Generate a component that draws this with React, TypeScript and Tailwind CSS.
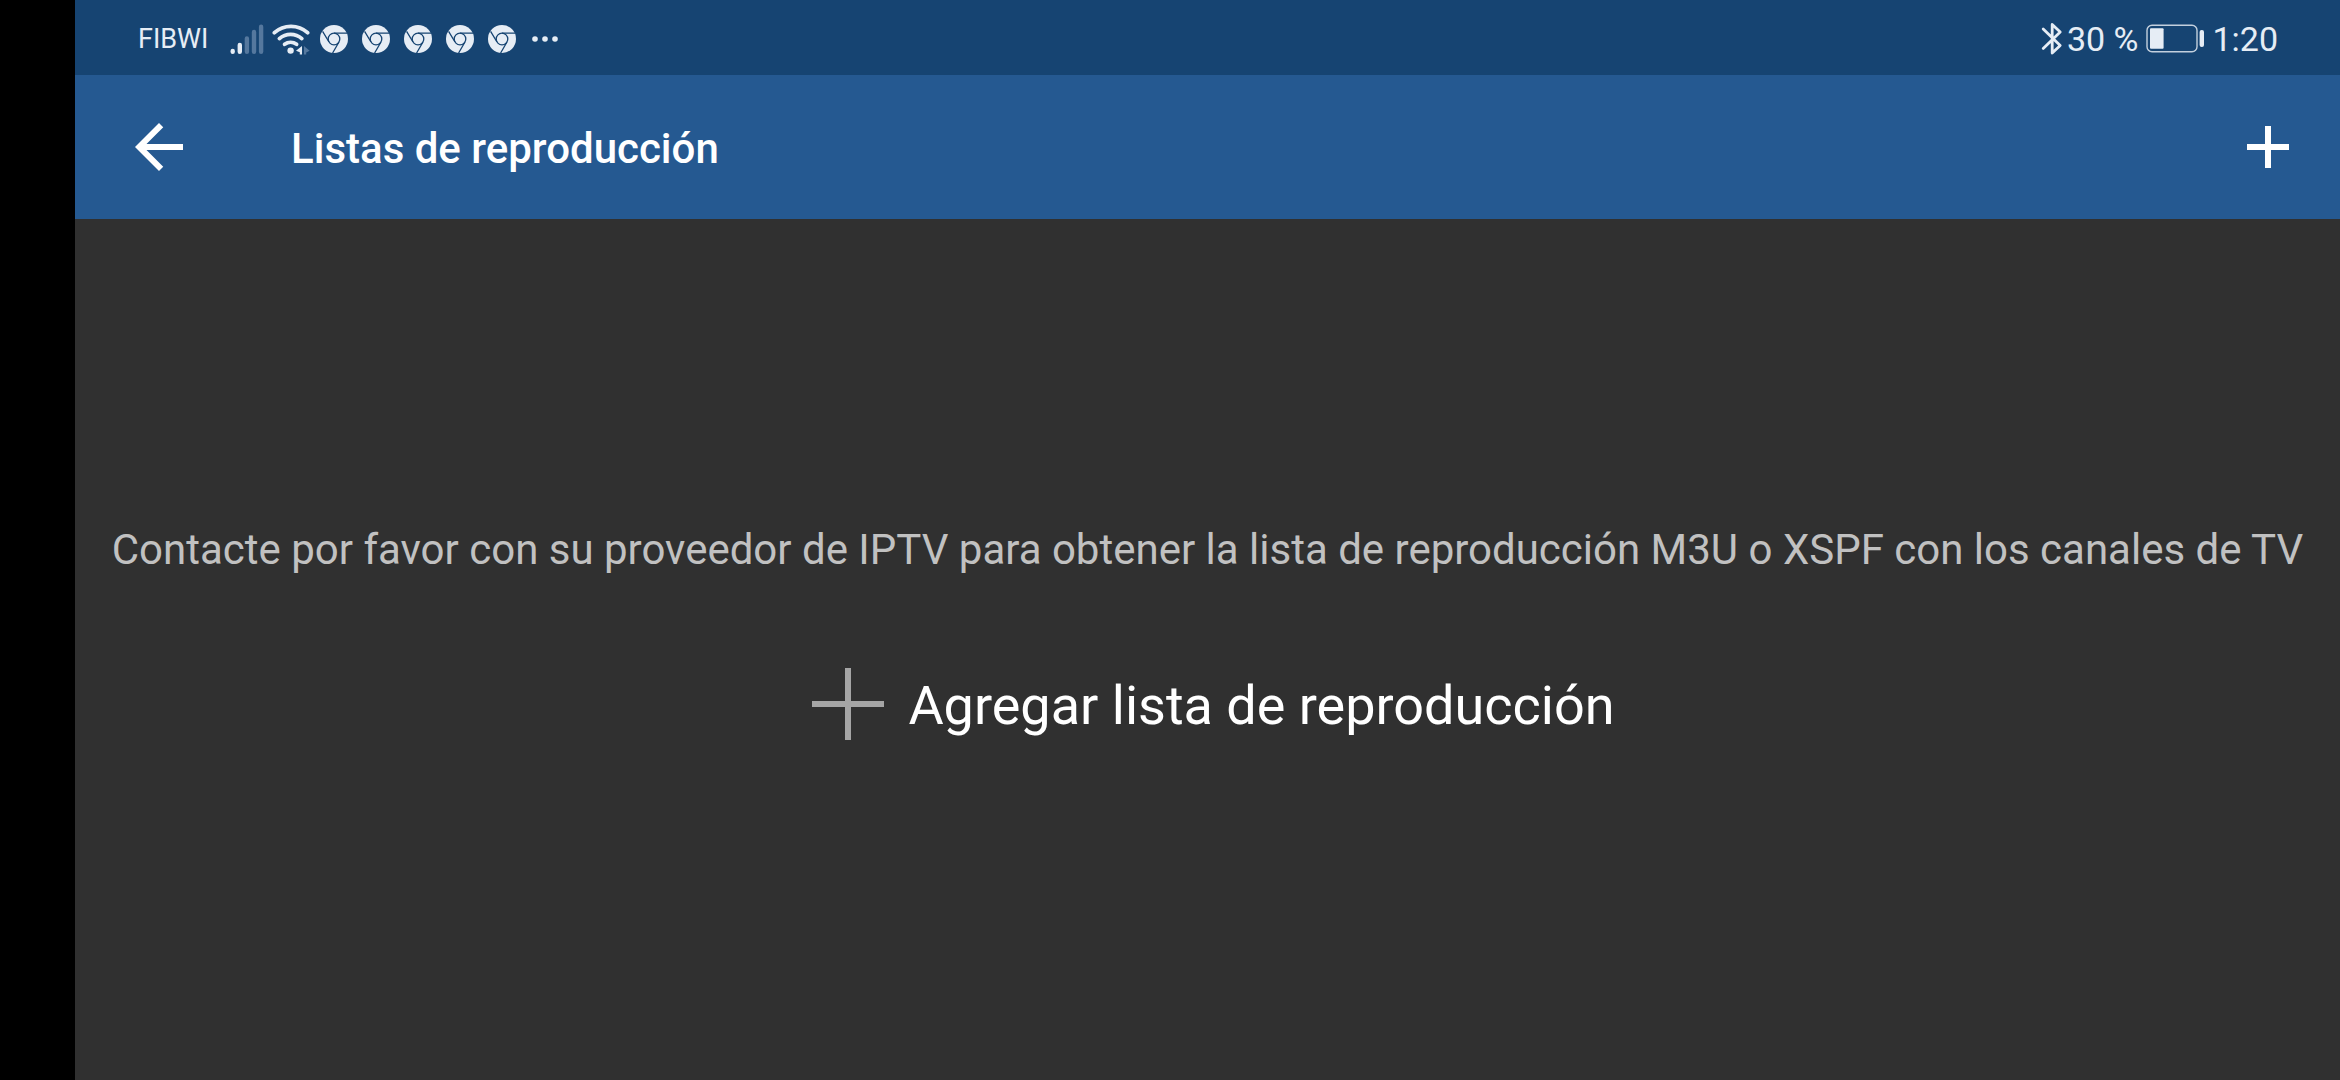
import React from 'react';

interface IconButtonProps {
  label: string;
  path: string;
}

const SignalIcon: React.FC = () => (
  <svg width="34" height="32" viewBox="0 0 34 32" strokeWidth="4.4" strokeLinecap="round" className="stroke-[#e6edf5]">
    <path d="M2.7 28v.8M9.8 22v6.8" />
    <path d="M16.9 15.5v13.3M24 9v19.8M31.1 3.7v25.1" className="stroke-[#55789e]" />
  </svg>
);

const WifiIcon: React.FC = () => (
  <svg width="38" height="32" viewBox="0 0 38 32" fill="none">
    <g strokeWidth="3.8" strokeLinecap="round" className="stroke-[#e6edf5]">
      <path d="M2.4 9.7a25 25 0 0 1 33.2 0" />
      <path d="M7.4 15.6a17 17 0 0 1 22.4 0" />
      <path d="M12.6 21.3a10 10 0 0 1 12 0" />
    </g>
    <circle cx="18.6" cy="27.6" r="3.2" className="fill-[#e6edf5]" />
    <path d="M30 23v8.6h-2.2v-2.4L24 27.8z" className="fill-[#e6edf5]" />
    <path d="M32 23l5.6 4.8-3.4 1.6v2.2H32z" className="fill-[#55789e]" />
  </svg>
);

const ChromeIcon: React.FC = () => (
  <svg width="28" height="28" viewBox="0 0 28 28" fill="none">
    <circle cx="14" cy="14" r="14" className="fill-[#e6edf5]" />
    <g strokeWidth="1.3" className="stroke-[#164472]">
      <circle cx="14" cy="14" r="5.8" />
      <path d="M14 8.2h13M9 17L2.6 6.3M19 17l-6.4 11" />
    </g>
  </svg>
);

const BluetoothIcon: React.FC = () => (
  <svg width="22" height="34" viewBox="0 0 22 34" fill="none" strokeWidth="2.8" strokeLinejoin="round" strokeLinecap="round" className="stroke-[#e6edf5]">
    <path d="M2.2 7l17 16.4-8 7.6V2.4l8 7.6-17 16.4" />
  </svg>
);

const BatteryIcon: React.FC = () => (
  <svg width="60" height="30" viewBox="0 0 60 30" fill="none">
    <rect x="1" y="1.2" width="50" height="26.6" rx="5" strokeWidth="1.4" className="stroke-[#c3d0de]" />
    <rect x="4" y="4.2" width="13.6" height="20.6" rx="1" className="fill-[#e6edf5]" />
    <rect x="53.6" y="6" width="4.4" height="17" rx="2" className="fill-[#e6edf5]" />
  </svg>
);

const IconButton: React.FC<IconButtonProps> = ({ label, path }) => (
  <button aria-label={label}>
    <svg viewBox="0 0 24 24" className="size-[72px] fill-white">
      <path d={path} />
    </svg>
  </button>
);

const StatusBar: React.FC = () => (
  <div className="flex h-[75px] items-center justify-between bg-[#164472] pl-[63px] pr-[62px] pt-[3px] text-[#e6edf5]">
    <div className="flex items-center">
      <span className="mr-[22px] text-[27px]">FIBWI</span>
      <SignalIcon />
      <div className="ml-2 mr-2.5">
        <WifiIcon />
      </div>
      <div className="flex items-center gap-3.5">
        {[1, 2, 3, 4, 5].map((n) => (
          <ChromeIcon key={n} />
        ))}
        <svg width="30" height="8" viewBox="0 0 30 8" className="fill-[#e6edf5]">
          <circle cx="5" cy="4" r="2.8" />
          <circle cx="15" cy="4" r="2.8" />
          <circle cx="25" cy="4" r="2.8" />
        </svg>
      </div>
    </div>
    <div className="flex items-center text-[34px]">
      <BluetoothIcon />
      <span className="ml-1 mr-2">30 %</span>
      <BatteryIcon />
      <span className="ml-1.5">1:20</span>
    </div>
  </div>
);

const App: React.FC = () => {
  return (
    <div className="flex min-h-screen bg-black font-[Roboto,sans-serif]">
      <div className="ml-[75px] flex grow flex-col bg-[#303030]">
        <StatusBar />
        <header className="flex h-36 items-center bg-[#255991] pl-12 pr-9 text-white">
          <IconButton label="Atrás" path="M20 11H7.83l5.59-5.59L12 4l-8 8 8 8 1.41-1.41L7.83 13H20v-2z" />
          <h1 className="ml-24 grow pt-[3px] text-[42px] font-medium">Listas de reproducción</h1>
          <IconButton label="Agregar" path="M19 13h-6v6h-2v-6H5v-2h6V5h2v6h6v2z" />
        </header>
        <main className="flex grow flex-col items-center justify-center gap-[88px] pb-9 text-center">
          <p className="text-[42px] leading-[56px] text-[#c1c1c1]">
            Contacte por favor con su proveedor de IPTV para obtener la lista de reproducción M3U o XSPF con los canales de TV
          </p>
          <button className="flex items-center gap-6 pl-3 text-[54px] leading-[72px] text-white">
            <svg viewBox="0 0 72 72" strokeWidth="6" className="size-[72px] stroke-[#a5a5a5]">
              <path d="M36 0v72M0 36h72" />
            </svg>
            <span className="pt-1">Agregar lista de reproducción</span>
          </button>
        </main>
      </div>
    </div>
  );
};

export default App;
